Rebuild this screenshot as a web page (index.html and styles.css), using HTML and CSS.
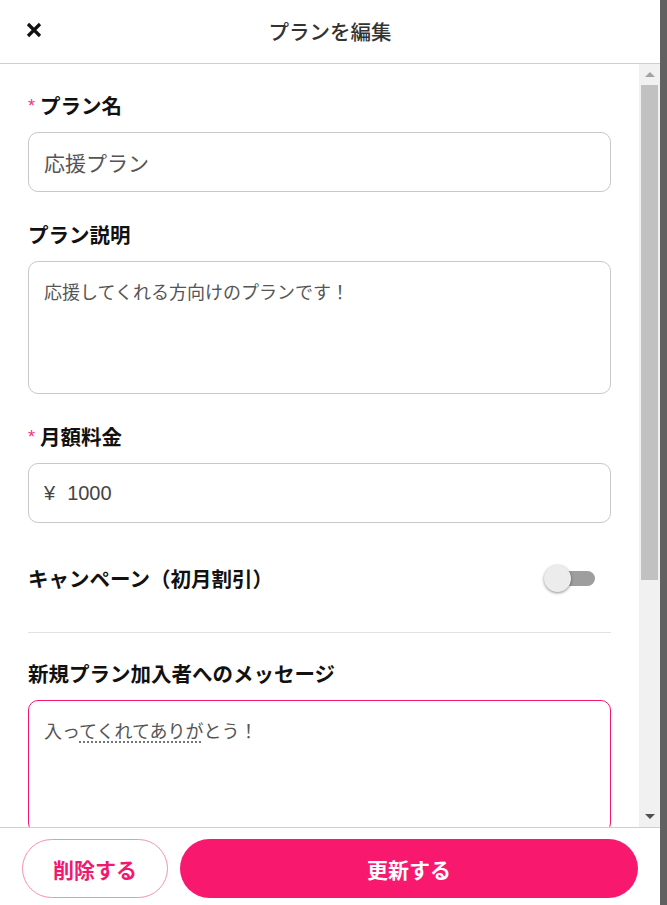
FILE: index.html
```html
<!DOCTYPE html>
<html lang="ja">
<head>
<meta charset="utf-8">
<title>プランを編集</title>
<link rel="stylesheet" href="styles.css">
</head>
<body>
<div class="page">
  <div class="modal">
    <header class="header">
      <button class="close" aria-label="閉じる">
        <svg width="16" height="16" viewBox="0 0 16 16"><path d="M2 2L14 14M14 2L2 14" stroke="#111" stroke-width="3.2" stroke-linecap="butt" fill="none"/></svg>
      </button>
      <h1 class="title">プランを編集</h1>
    </header>
    <div class="main">
      <div class="content">
        <div class="field">
          <div class="label"><span class="req">*</span>プラン名</div>
          <div class="box input">応援プラン</div>
        </div>
        <div class="field">
          <div class="label">プラン説明</div>
          <div class="box textarea">応援してくれる方向けのプランです！</div>
        </div>
        <div class="field">
          <div class="label"><span class="req">*</span>月額料金</div>
          <div class="box input price"><span class="yen">¥</span>1000</div>
        </div>
        <div class="toggle-row">
          <div class="toggle-label">キャンペーン（初月割引）</div>
          <div class="switch">
            <div class="track"></div>
            <div class="thumb"></div>
          </div>
        </div>
        <div class="divider"></div>
        <div class="field field-last">
          <div class="label">新規プラン加入者へのメッセージ</div>
          <div class="box textarea active">入っ<span class="compose">てくれてありが</span>とう！</div>
        </div>
      </div>
      <div class="scrollbar">
        <div class="sb-btn"><span class="arrow-up"></span></div>
        <div class="sb-thumb"></div>
        <div class="sb-space"></div>
        <div class="sb-btn"><span class="arrow-down"></span></div>
      </div>
    </div>
    <footer class="footer">
      <button class="btn btn-delete">削除する</button>
      <button class="btn btn-update">更新する</button>
    </footer>
  </div>
  <div class="backdrop"></div>
</div>
</body>
</html>
```
FILE: styles.css
```css
* { box-sizing: border-box; }
html, body { margin: 0; padding: 0; }
body {
  font-family: "Noto Sans CJK JP", "Noto Sans", sans-serif;
  color: #222;
  background: #fff;
}
.page {
  display: flex;
  width: 667px;
  height: 905px;
  overflow: hidden;
}
.modal {
  width: 660px;
  height: 905px;
  display: flex;
  flex-direction: column;
  background: #fff;
}
.backdrop {
  flex: 1;
  background: #616161;
}
.header {
  height: 64px;
  flex: none;
  border-bottom: 1px solid #cfcfcf;
  display: flex;
  align-items: center;
  position: relative;
}
.close {
  position: absolute;
  left: 26px;
  top: 22px;
  width: 16px;
  height: 16px;
  padding: 0;
  border: 0;
  background: none;
  display: flex;
}
.title {
  flex: 1;
  margin: 0;
  text-align: center;
  font-size: 20.5px;
  font-weight: 500;
  line-height: 28px;
  color: #333;
  padding-bottom: 2px;
}
.main {
  flex: 1;
  display: flex;
  min-height: 0;
}
.content {
  flex: 1;
  overflow: hidden;
  padding: 27px 28px 0 28px;
}
.field { margin-bottom: 28px; }
.label {
  height: 28px;
  font-size: 20.5px;
  font-weight: 700;
  line-height: 28px;
  color: #111;
  margin-bottom: 13px;
  display: flex;
  align-items: flex-start;
}
.req {
  color: #f5317f;
  font-size: 18px;
  font-weight: 400;
  line-height: 20px;
  margin-right: 5px;
  margin-top: 5px;
  font-family: "Liberation Sans", sans-serif;
}
.box {
  border: 1px solid #c8c8c8;
  border-radius: 10px;
  color: #555;
  background: #fff;
}
.input {
  height: 60px;
  display: flex;
  align-items: center;
  padding: 0 15px;
  font-size: 21px;
  font-weight: 400;
}
.price {
  font-family: "Liberation Sans", "Noto Sans CJK JP", sans-serif;
  font-size: 20px;
  color: #444;
}
.yen { margin-right: 12px; }
.textarea {
  height: 133px;
  padding: 16px 15px;
  font-size: 18px;
  line-height: 26px;
}
.active { border-color: #f0196f; }
.compose {
  text-decoration: underline dotted #666;
  text-underline-offset: 4px;
}
.toggle-row {
  height: 54px;
  display: flex;
  align-items: center;
  justify-content: space-between;
  padding-right: 16px;
}
.toggle-label {
  font-size: 20.5px;
  font-weight: 700;
  color: #111;
  line-height: 28px;
}
.switch {
  position: relative;
  width: 51px;
  height: 28px;
  display: flex;
  align-items: center;
}
.track {
  margin-left: 9px;
  width: 42px;
  height: 15px;
  border-radius: 8px;
  background: #9e9e9e;
}
.thumb {
  position: absolute;
  left: 0;
  top: 1px;
  width: 27px;
  height: 27px;
  border-radius: 50%;
  background: #ececec;
  box-shadow: 0 1px 3px rgba(0,0,0,0.45);
}
.divider {
  margin-top: 27px;
  height: 1px;
  background: #e2e2e2;
  margin-bottom: 26px;
}
.scrollbar {
  width: 21px;
  flex: none;
  background: #f1f1f1;
  display: flex;
  flex-direction: column;
}
.sb-btn {
  height: 21px;
  display: flex;
  align-items: center;
  justify-content: center;
}
.arrow-up {
  width: 0; height: 0;
  border-left: 5px solid transparent;
  border-right: 5px solid transparent;
  border-bottom: 5px solid #a3a3a3;
}
.arrow-down {
  width: 0; height: 0;
  border-left: 5px solid transparent;
  border-right: 5px solid transparent;
  border-top: 5px solid #505050;
}
.sb-thumb {
  height: 495px;
  margin: 0 2px;
  background: #c1c1c1;
}
.sb-space { flex: 1; }
.footer {
  height: 78px;
  flex: none;
  border-top: 1px solid #cfcfcf;
  display: flex;
  gap: 12px;
  padding: 11px 22px 0 22px;
  align-items: flex-start;
}
.btn {
  height: 59px;
  border-radius: 30px;
  font-family: "Noto Sans CJK JP", sans-serif;
  font-size: 21px;
  font-weight: 700;
  cursor: pointer;
}
.btn-delete {
  width: 146px;
  background: #fff;
  color: #f0196f;
  border: 1px solid #f690b6;
}
.btn-update {
  flex: 1;
  background: #f8196f;
  color: #fff;
  border: 0;
}
```
